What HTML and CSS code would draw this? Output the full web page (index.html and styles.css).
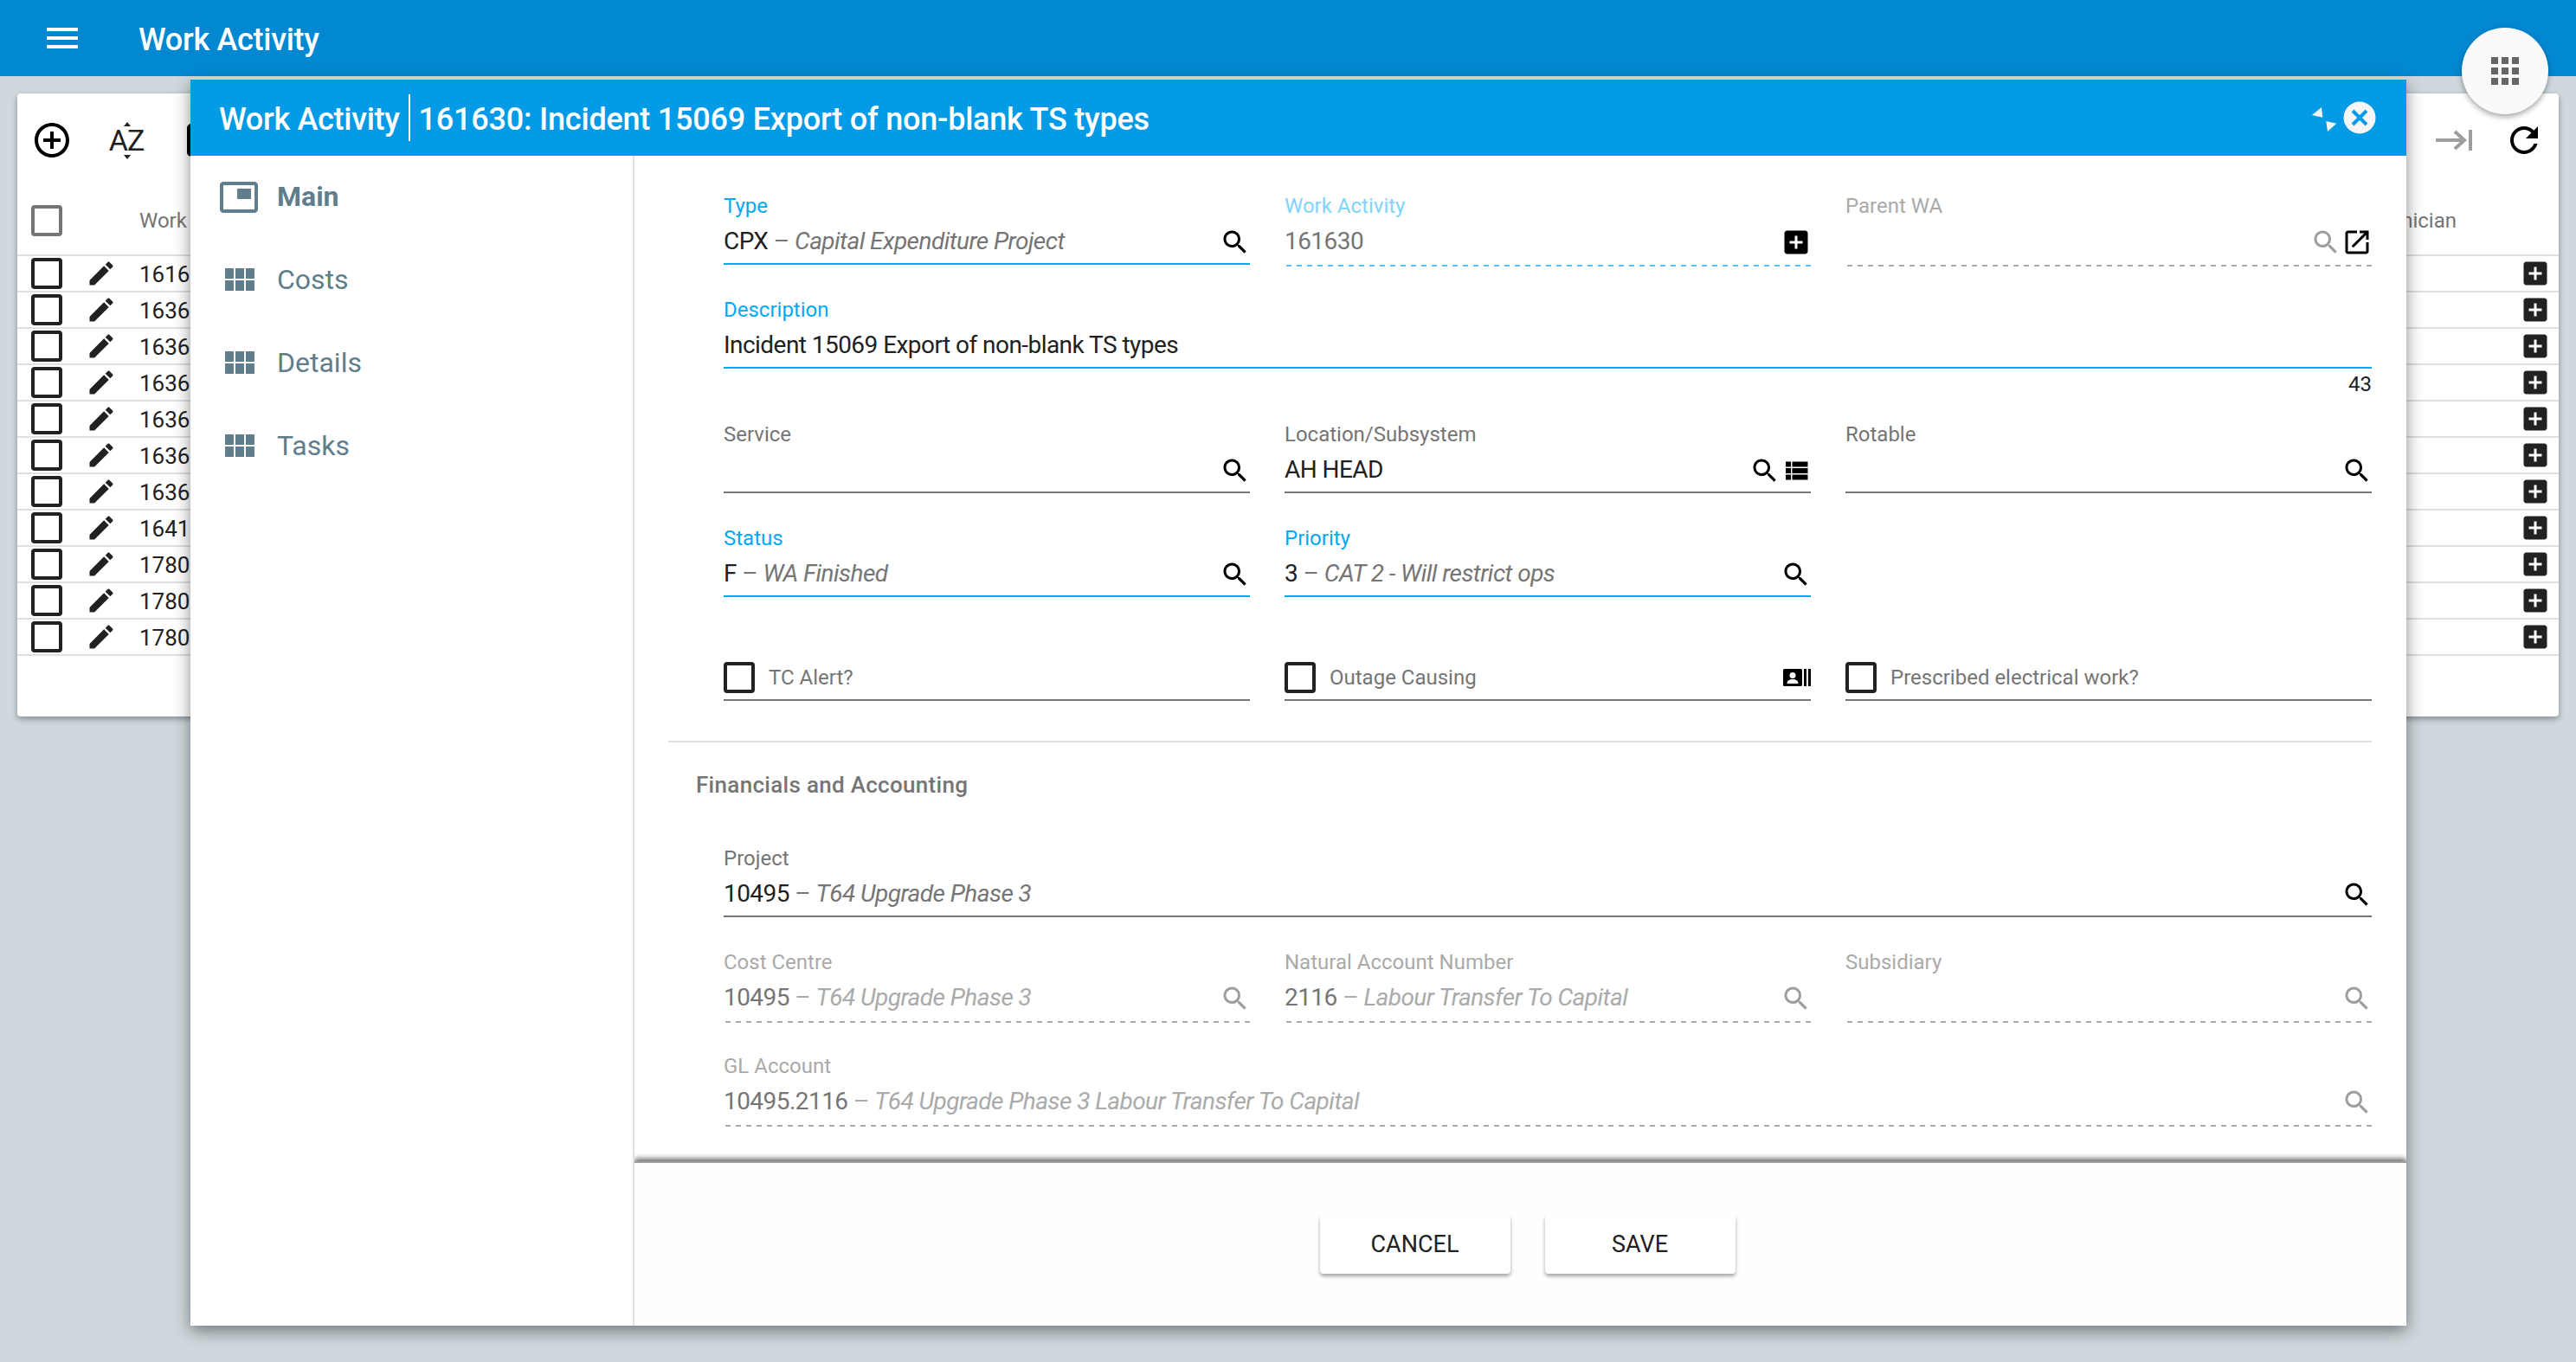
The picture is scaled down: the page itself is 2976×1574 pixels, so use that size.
FILE: index.html
```html
<!DOCTYPE html>
<html lang="en">
<head>
<meta charset="utf-8">
<title>Work Activity</title>
<link rel="stylesheet" href="styles.css">
</head>
<body>
<svg class="sprite" width="0" height="0" aria-hidden="true">
  <symbol id="i-search" viewBox="0 0 24 24"><path d="M15.5 14h-.79l-.28-.27C15.41 12.59 16 11.11 16 9.5 16 5.91 13.09 3 9.5 3S3 5.91 3 9.5 5.91 16 9.5 16c1.61 0 3.09-.59 4.23-1.57l.27.28v.79l5 4.99L20.49 19l-4.99-5zm-6 0C7.01 14 5 11.99 5 9.5S7.01 5 9.5 5 14 7.01 14 9.5 11.99 14 9.5 14z"/></symbol>
  <symbol id="i-addbox" viewBox="0 0 24 24"><path d="M19 3H5c-1.11 0-2 .9-2 2v14c0 1.1.89 2 2 2h14c1.1 0 2-.9 2-2V5c0-1.1-.9-2-2-2zm-2 10h-4v4h-2v-4H7v-2h4V7h2v4h4v2z"/></symbol>
  <symbol id="i-open" viewBox="0 0 24 24"><path d="M19 19H5V5h7V3H5c-1.11 0-2 .9-2 2v14c0 1.1.89 2 2 2h14c1.1 0 2-.9 2-2v-7h-2v7zM14 3v2h3.59l-9.83 9.83 1.41 1.41L19 6.41V10h2V3h-7z"/></symbol>
  <symbol id="i-list" viewBox="0 0 24 24"><path d="M4 14h4v-4H4v4zm0 5h4v-4H4v4zm0-10h4V5H4v4zm5 5h12v-4H9v4zm0 5h12v-4H9v4zM9 5v4h12V5H9z"/></symbol>
  <symbol id="i-module" viewBox="0 0 24 24"><path d="M4 11h5V5H4v6zm0 7h5v-6H4v6zm6 0h5v-6h-5v6zm6 0h5v-6h-5v6zm-6-7h5V5h-5v6zm6-6v6h5V5h-5z"/></symbol>
  <symbol id="i-edit" viewBox="0 0 24 24"><path d="M3 17.25V21h3.75L17.81 9.94l-3.75-3.75L3 17.25zM20.71 7.04c.39-.39.39-1.02 0-1.41l-2.34-2.34c-.39-.39-1.02-.39-1.41 0l-1.83 1.83 3.75 3.75 1.83-1.83z"/></symbol>
</svg>

<header class="topbar">
  <svg class="icon48 menu-icon" viewBox="0 0 24 24"><path d="M3 18h18v-2H3v2zm0-5h18v-2H3v2zm0-7v2h18V6H3z"/></svg>
  <h1 class="topbar-title">Work Activity</h1>
</header>

<main class="page">
  <section class="card">
    <div class="toolbar">
      <svg class="icon48" viewBox="0 0 24 24"><path d="M13 7h-2v4H7v2h4v4h2v-4h4v-2h-4V7zm-1-5C6.48 2 2 6.48 2 12s4.48 10 10 10 10-4.48 10-10S17.52 2 12 2zm0 18c-4.41 0-8-3.59-8-8s3.59-8 8-8 8 3.59 8 8-3.59 8-8 8z"/></svg>
      <span class="sort-btn"><span class="sort-up"></span><span class="sort-text">AZ</span><span class="sort-down"></span></span>
      <span class="tool-box"></span>
      <svg class="last-icon" width="42" height="24" viewBox="0 0 42 24"><path d="M0 12h34M22 2l11 10-11 10" fill="none" stroke="#9e9e9e" stroke-width="4"/><rect x="38" width="4" height="24" fill="#9e9e9e"/></svg>
      <svg class="icon48 refresh-icon" viewBox="0 0 24 24"><path d="M17.65 6.35C16.2 4.9 14.21 4 12 4c-4.42 0-7.99 3.58-7.99 8s3.57 8 7.99 8c3.73 0 6.84-2.55 7.73-6h-2.08c-.82 2.33-3.04 4-5.65 4-3.31 0-6-2.69-6-6s2.69-6 6-6c1.66 0 3.14.69 4.22 1.78L13 11h7V4l-2.35 2.35z"/></svg>
    </div>
    <div class="table-head">
      <span class="box box-muted"></span>
      <span class="col-id col-head">Work Activity</span>
      <span class="col-tech col-head">Technician</span>
    </div>
    <div class="row"><span class="box"></span><svg class="edit"><use href="#i-edit"/></svg><span class="col-id">161630</span><svg class="row-add"><use href="#i-addbox"/></svg></div>
    <div class="row"><span class="box"></span><svg class="edit"><use href="#i-edit"/></svg><span class="col-id">163601</span><svg class="row-add"><use href="#i-addbox"/></svg></div>
    <div class="row"><span class="box"></span><svg class="edit"><use href="#i-edit"/></svg><span class="col-id">163602</span><svg class="row-add"><use href="#i-addbox"/></svg></div>
    <div class="row"><span class="box"></span><svg class="edit"><use href="#i-edit"/></svg><span class="col-id">163603</span><svg class="row-add"><use href="#i-addbox"/></svg></div>
    <div class="row"><span class="box"></span><svg class="edit"><use href="#i-edit"/></svg><span class="col-id">163604</span><svg class="row-add"><use href="#i-addbox"/></svg></div>
    <div class="row"><span class="box"></span><svg class="edit"><use href="#i-edit"/></svg><span class="col-id">163605</span><svg class="row-add"><use href="#i-addbox"/></svg></div>
    <div class="row"><span class="box"></span><svg class="edit"><use href="#i-edit"/></svg><span class="col-id">163606</span><svg class="row-add"><use href="#i-addbox"/></svg></div>
    <div class="row"><span class="box"></span><svg class="edit"><use href="#i-edit"/></svg><span class="col-id">164101</span><svg class="row-add"><use href="#i-addbox"/></svg></div>
    <div class="row"><span class="box"></span><svg class="edit"><use href="#i-edit"/></svg><span class="col-id">178001</span><svg class="row-add"><use href="#i-addbox"/></svg></div>
    <div class="row"><span class="box"></span><svg class="edit"><use href="#i-edit"/></svg><span class="col-id">178002</span><svg class="row-add"><use href="#i-addbox"/></svg></div>
    <div class="row"><span class="box"></span><svg class="edit"><use href="#i-edit"/></svg><span class="col-id">178003</span><svg class="row-add"><use href="#i-addbox"/></svg></div>
  </section>
</main>

<button class="fab" type="button" aria-label="Apps">
  <svg class="icon48" viewBox="0 0 24 24"><path d="M4 8h4V4H4v4zm6 12h4v-4h-4v4zm-6 0h4v-4H4v4zm0-6h4v-4H4v4zm6 0h4v-4h-4v4zm6-10v4h4V4h-4zm-6 4h4V4h-4v4zm6 6h4v-4h-4v4zm0 6h4v-4h-4v4z"/></svg>
</button>

<section class="modal">
  <header class="modal-head">
    <span class="modal-kind">Work Activity</span>
    <span class="modal-title">161630: Incident 15069 Export of non-blank TS types</span>
    <svg class="modal-resize" width="30" height="30" viewBox="0 0 30 30"><polygon points="11,0 0,9 12.3,11.700"/><polygon points="16.300,16 28.300,18.700 18,28"/></svg>
    <svg class="modal-close" width="38" height="38" viewBox="0 0 38 38"><circle cx="19" cy="19" r="18.500" fill="#f5f5f5"/><path d="M11 11l16 16M27 11L11 27" stroke="#039be5" stroke-width="4"/></svg>
  </header>
  <div class="modal-body">
    <nav class="side">
      <a class="side-item side-active">
        <svg class="icon48" viewBox="0 0 24 24"><path d="M21 3H3c-1.100 0-2 .9-2 2v14c0 1.100.9 2 2 2h18c1.100 0 2-.9 2-2V5c0-1.100-.9-2-2-2zm0 16H3V5h18v14z"/><rect x="11" y="7" width="8" height="6"/></svg>
        <span class="side-text">Main</span>
      </a>
      <a class="side-item"><svg class="icon48"><use href="#i-module"/></svg><span class="side-text">Costs</span></a>
      <a class="side-item"><svg class="icon48"><use href="#i-module"/></svg><span class="side-text">Details</span></a>
      <a class="side-item"><svg class="icon48"><use href="#i-module"/></svg><span class="side-text">Tasks</span></a>
    </nav>
    <div class="content">
      <form class="form">
        <div class="grid">
          <div class="field is-active">
            <label class="label">Type</label>
            <div class="control"><span class="value">CPX <i>– <em>Capital Expenditure Project</em></i></span><span class="icons"><svg class="ic"><use href="#i-search"/></svg></span></div>
          </div>
          <div class="field is-active-off">
            <label class="label">Work Activity</label>
            <div class="control"><span class="value">161630</span><span class="icons"><svg class="ic"><use href="#i-addbox"/></svg></span></div>
          </div>
          <div class="field is-off">
            <label class="label">Parent WA</label>
            <div class="control"><span class="value"></span><span class="icons"><svg class="ic ic-muted"><use href="#i-search"/></svg><svg class="ic"><use href="#i-open"/></svg></span></div>
          </div>

          <div class="field is-active span3">
            <label class="label">Description</label>
            <div class="control"><span class="value">Incident 15069 Export of non-blank TS types</span></div>
          </div>
          <div class="counter span3">43</div>

          <div class="field">
            <label class="label">Service</label>
            <div class="control"><span class="value"></span><span class="icons"><svg class="ic"><use href="#i-search"/></svg></span></div>
          </div>
          <div class="field">
            <label class="label">Location/Subsystem</label>
            <div class="control"><span class="value">AH HEAD</span><span class="icons"><svg class="ic"><use href="#i-search"/></svg><svg class="ic"><use href="#i-list"/></svg></span></div>
          </div>
          <div class="field">
            <label class="label">Rotable</label>
            <div class="control"><span class="value"></span><span class="icons"><svg class="ic"><use href="#i-search"/></svg></span></div>
          </div>

          <div class="field is-active">
            <label class="label">Status</label>
            <div class="control"><span class="value">F <i>– <em>WA Finished</em></i></span><span class="icons"><svg class="ic"><use href="#i-search"/></svg></span></div>
          </div>
          <div class="field is-active">
            <label class="label">Priority</label>
            <div class="control"><span class="value">3 <i>– <em>CAT 2 - Will restrict ops</em></i></span><span class="icons"><svg class="ic"><use href="#i-search"/></svg></span></div>
          </div>
          <div class="field"></div>

          <div class="field field-check">
            <div class="control"><span class="box"></span><span class="check-text">TC Alert?</span></div>
          </div>
          <div class="field field-check">
            <div class="control"><span class="box"></span><span class="check-text">Outage Causing</span>
              <svg class="outage" width="32" height="20" viewBox="0 0 32 20"><rect width="22" height="20" rx="1.500"/><circle cx="11" cy="7.500" r="3.500" fill="#fff"/><path d="M4.500 17c0-3.600 3-5 6.500-5s6.500 1.400 6.500 5z" fill="#fff"/><rect x="24" width="3" height="20"/><rect x="29" width="3" height="20"/></svg>
            </div>
          </div>
          <div class="field field-check">
            <div class="control"><span class="box"></span><span class="check-text">Prescribed electrical work?</span></div>
          </div>
        </div>

        <hr class="divider">
        <h2 class="section-title">Financials and Accounting</h2>

        <div class="grid">
          <div class="field span3">
            <label class="label">Project</label>
            <div class="control"><span class="value">10495 <i>– <em>T64 Upgrade Phase 3</em></i></span><span class="icons"><svg class="ic"><use href="#i-search"/></svg></span></div>
          </div>
          <div class="field is-off">
            <label class="label">Cost Centre</label>
            <div class="control"><span class="value">10495 <i>– <em>T64 Upgrade Phase 3</em></i></span><span class="icons"><svg class="ic ic-muted"><use href="#i-search"/></svg></span></div>
          </div>
          <div class="field is-off">
            <label class="label">Natural Account Number</label>
            <div class="control"><span class="value">2116 <i>– <em>Labour Transfer To Capital</em></i></span><span class="icons"><svg class="ic ic-muted"><use href="#i-search"/></svg></span></div>
          </div>
          <div class="field is-off">
            <label class="label">Subsidiary</label>
            <div class="control"><span class="value"></span><span class="icons"><svg class="ic ic-muted"><use href="#i-search"/></svg></span></div>
          </div>
          <div class="field is-off span3">
            <label class="label">GL Account</label>
            <div class="control"><span class="value">10495.2116 <i>– <em>T64 Upgrade Phase 3 Labour Transfer To Capital</em></i></span><span class="icons"><svg class="ic ic-muted"><use href="#i-search"/></svg></span></div>
          </div>
        </div>
      </form>
      <footer class="actions">
        <button class="btn" type="button">CANCEL</button>
        <button class="btn" type="button">SAVE</button>
      </footer>
    </div>
  </div>
</section>
</body>
</html>
```

FILE: styles.css
```css
* { box-sizing: border-box; }
html, body { margin: 0; height: 1574px; overflow: hidden; }
body {
  position: relative;
  background: #cfd8dc;
  font-family: Roboto, "Liberation Sans", sans-serif;
  color: #212121;
}
.sprite { position: absolute; }
svg { fill: currentColor; display: block; flex: none; }
.icon48 { width: 48px; height: 48px; }

/* top bar */
.topbar {
  position: relative;
  z-index: 2;
  height: 88px;
  display: flex;
  align-items: center;
  padding-left: 48px;
  background: #0288d1;
  color: #fff;
}
.topbar-title { margin: 4px 0 0 64px; font-size: 36px; font-weight: 500; line-height: 48px; letter-spacing: -.3px; }

/* background table */
.page { padding: 20px 20px 0; }
.card {
  height: 720px;
  background: #fff;
  border-radius: 4px;
  box-shadow: 0 3px 7px rgba(0, 0, 0, .35);
}
.toolbar {
  height: 108px;
  display: flex;
  align-items: center;
  padding: 0 16px;
  color: #000;
}
.sort-btn {
  position: relative;
  width: 40px;
  height: 40px;
  margin-left: 42px;
  display: flex;
  align-items: center;
  justify-content: center;
}
.sort-text { font-size: 34px; line-height: 34px; letter-spacing: -1px; color: #212121; }
.sort-up, .sort-down {
  position: absolute;
  left: 17px;
  width: 0;
  height: 0;
  border-left: 4px solid transparent;
  border-right: 4px solid transparent;
}
.sort-up { top: -1px; border-bottom: 5px solid #212121; }
.sort-down { bottom: -2px; border-top: 5px solid #212121; }
.tool-box {
  width: 40px;
  height: 38px;
  margin-left: 50px;
  border: 6px solid #000;
  border-radius: 5px;
}
.last-icon { margin-left: auto; }
.refresh-icon { margin-left: 36px; }

.table-head, .row {
  display: flex;
  align-items: center;
  padding-left: 16px;
  border-bottom: 2px solid #e0e0e0;
}
.table-head { height: 80px; }
.row { height: 42px; }
.box {
  flex: none;
  width: 36px;
  height: 36px;
  border: 4px solid #212121;
  border-radius: 4px;
  background: #fff;
}
.box-muted { border-color: #757575; }
.edit { width: 36px; height: 36px; margin-left: 27px; color: #212121; }
.col-id { font-size: 26px; margin: 2px 0 0 26px; color: #212121; }
.col-head { font-size: 24px; margin: 0 0 0 89px; color: #757575; }
.col-tech { margin-left: auto; margin-right: 118px; }
.row-add { width: 36px; height: 36px; margin-left: auto; margin-right: 9px; color: #212121; }

/* floating button */
.fab {
  position: absolute;
  z-index: 5;
  left: 2844px;
  top: 32px;
  width: 100px;
  height: 100px;
  padding: 26px;
  border: 0;
  border-radius: 50%;
  background: #fafafa;
  color: #666;
  box-shadow: 0 3px 6px rgba(0, 0, 0, .35);
}

/* modal window */
.modal {
  position: absolute;
  z-index: 3;
  left: 220px;
  top: 92px;
  width: 2560px;
  height: 1440px;
  display: flex;
  flex-direction: column;
  background: #fff;
  box-shadow: 0 6px 18px rgba(0, 0, 0, .45);
}
.modal::before {
  content: "";
  position: absolute;
  left: 0;
  right: 0;
  top: -4px;
  height: 4px;
  background: #d0d0d0;
}
.modal-head {
  height: 88px;
  flex: none;
  display: flex;
  align-items: center;
  padding-left: 33px;
  background: #039be5;
  color: #fff;
  font-size: 36px;
  font-weight: 500;
  letter-spacing: -.3px;
}
.modal-kind { height: 54px; line-height: 58px; padding-right: 10px; border-right: 2px solid #fff; }
.modal-title { margin: 4px 0 0 10px; letter-spacing: -.22px; }
.modal-resize { margin: 6px 0 0 auto; fill: #f5f5f5; }
.modal-close { margin-left: 6px; margin-right: 35px; }

.modal-body { flex: 1; min-height: 0; display: flex; }
.side { width: 513px; flex: none; border-right: 2px solid #e0e0e0; }
.side-item {
  height: 96px;
  display: flex;
  align-items: center;
  gap: 20px;
  padding-left: 32px;
  color: #607d8b;
  font-size: 32px;
}
.side-text { margin-bottom: 2px; }
.side-active { font-weight: 700; }

.content { flex: 1; min-width: 0; display: flex; flex-direction: column; overflow: hidden; }
.form { flex: 1; min-height: 0; padding-top: 6px; }
.grid {
  display: grid;
  grid-template-columns: repeat(3, 608px);
  column-gap: 40px;
  padding-left: 103px;
}
.span3 { grid-column: 1 / -1; }
.field { height: 120px; display: flex; flex-direction: column; justify-content: flex-end; }
.label { height: 30px; line-height: 28px; font-size: 24px; color: #757575; }
.control {
  height: 52px;
  display: flex;
  align-items: center;
  padding-bottom: 2px;
  border-bottom: 2px solid #757575;
  font-size: 28px;
}
.value { flex: 1; min-width: 0; color: #212121; white-space: nowrap; letter-spacing: -.55px; }
.value i { font-style: normal; color: #757575; }
.value em { font-style: italic; }
.icons { display: flex; margin-right: -1px; margin-top: 4px; color: #000; }
.ic { width: 36px; height: 36px; }
.ic-muted { color: #9e9e9e; }

.is-active .label { color: #03a9f4; }
.is-active .control { border-color: #03a9f4; }
.is-active-off .label { color: #81d4fa; }
.is-active-off .value, .is-off .value { color: #757575; }
.is-off .value i { color: #aaa; }
.is-off .label { color: #aaa; }
.is-active-off .control, .is-off .control {
  height: 54px;
  margin-bottom: -2px;
  padding-bottom: 6px;
  border-bottom: 0;
  background: repeating-linear-gradient(90deg, transparent 0 2px, #aaa 2px 8px, transparent 8px 12px) left bottom / 100% 2px no-repeat;
}
.is-active-off .control { background-image: repeating-linear-gradient(90deg, transparent 0 2px, #4fc3f7 2px 8px, transparent 8px 12px); }

.counter { height: 24px; line-height: 36px; text-align: right; font-size: 24px; color: #212121; }
.field-check .box { margin-top: 2px; }
.check-text { margin: 2px 0 0 16px; flex: 1; font-size: 24px; color: #757575; }
.outage { color: #000; fill: #000; margin-top: 2px; }

.divider { height: 2px; margin: 46px 0 0 39px; width: 1968px; border: 0; background: #e0e0e0; }
.section-title { height: 82px; margin: 0 0 0 71px; padding-top: 35px; font-size: 26px; line-height: 28px; font-weight: 500; letter-spacing: .3px; color: #757575; }

.actions {
  height: 190px;
  flex: none;
  display: flex;
  justify-content: center;
  gap: 40px;
  padding: 60px 0 0 16px;
  border-top: 2px solid #9e9e9e;
  background: #fefefe;
  box-shadow: 0 -3px 6px rgba(0, 0, 0, .6);
}
.btn {
  width: 220px;
  height: 68px;
  border: 0;
  border-radius: 4px;
  background: #fff;
  color: #212121;
  font-family: inherit;
  font-size: 27px;
  font-weight: 400;
  box-shadow: 0 3px 4px rgba(0, 0, 0, .35);
}
```
